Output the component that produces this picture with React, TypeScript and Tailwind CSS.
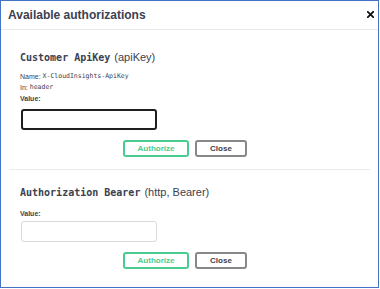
import React from "react";

const sans = { fontFamily: '"Liberation Sans", Arial, sans-serif' };
const mono = { fontFamily: '"DejaVu Sans Mono", "Liberation Mono", monospace' };

function Buttons() {
  return (
    <div className="flex pl-[103px] gap-[6px]">
      <button
        className="w-[66px] h-[17px] border-2 border-[#49cc90] rounded-[3px] text-[8px] font-bold text-[#49cc90] flex items-center justify-center"
        style={sans}
      >
        Authorize
      </button>
      <button
        className="w-[52px] h-[17px] border-2 border-[#888888] rounded-[3px] text-[8px] font-bold text-[#3b4151] flex items-center justify-center"
        style={sans}
      >
        Close
      </button>
    </div>
  );
}

export default function App() {
  return (
    <div className="w-[380px] h-[289px] bg-white">
      <div className="w-[379px] h-[288px] border border-[#4472c4] bg-white flex flex-col box-border">
        <div className="h-[29px] border-b border-[#ebebeb] flex items-center justify-between pl-[7px] pr-[4px] shrink-0">
          <h3 className="text-[12px] font-bold text-[#3b4151] leading-none" style={sans}>
            Available authorizations
          </h3>
          <svg width="7" height="7" viewBox="0 0 7 7" className="mt-[-2px]">
            <path d="M0.8 0.8 L6.2 6.2 M6.2 0.8 L0.8 6.2" stroke="#111" strokeWidth="1.8" strokeLinecap="square" />
          </svg>
        </div>
        <div className="px-[8px]">
          <div className="border-b border-[#ebebeb] pl-[11px] pb-[12px]">
            <h4 className="mt-[21px] h-[12px] flex items-baseline text-[#3b4151] whitespace-nowrap overflow-visible">
              <code className="text-[10px] font-semibold leading-[12px]" style={mono}>Customer ApiKey</code>
              <span className="text-[11px] leading-[12px] ml-[4px]" style={sans}>(apiKey)</span>
            </h4>
            <div className="mt-[8px] text-[#3b4151]">
              <p className="h-[11px] flex items-center text-[7px] leading-[11px]" style={sans}>
                Name:&nbsp;<code className="text-[6.5px] leading-[11px]" style={mono}>X-CloudInsights-ApiKey</code>
              </p>
              <p className="h-[11px] flex items-center text-[7px] leading-[11px]" style={sans}>
                In:&nbsp;<code className="text-[6.5px] leading-[11px]" style={mono}>header</code>
              </p>
              <p className="h-[11px] flex items-center text-[7px] leading-[11px] font-bold" style={sans}>Value:</p>
            </div>
            <div className="mt-[5px] ml-[1px] w-[136px] h-[21px] border-2 border-[#1f1f1f] rounded-[3px]" />
            <div className="mt-[10px]">
              <Buttons />
            </div>
          </div>
          <div className="pl-[11px]">
            <h4 className="mt-[16px] h-[12px] flex items-baseline text-[#3b4151] whitespace-nowrap">
              <code className="text-[10px] font-semibold leading-[12px]" style={mono}>Authorization Bearer</code>
              <span className="text-[11px] leading-[12px] ml-[4px]" style={sans}>(http, Bearer)</span>
            </h4>
            <p className="mt-[10px] h-[11px] flex items-center leading-[11px] text-[7px] font-bold text-[#3b4151]" style={sans}>Value:</p>
            <div className="mt-[2px] ml-[1px] w-[136px] h-[21px] border border-[#d9d9d9] rounded-[3px]" />
            <div className="mt-[10px]">
              <Buttons />
            </div>
          </div>
        </div>
      </div>
    </div>
  );
}
